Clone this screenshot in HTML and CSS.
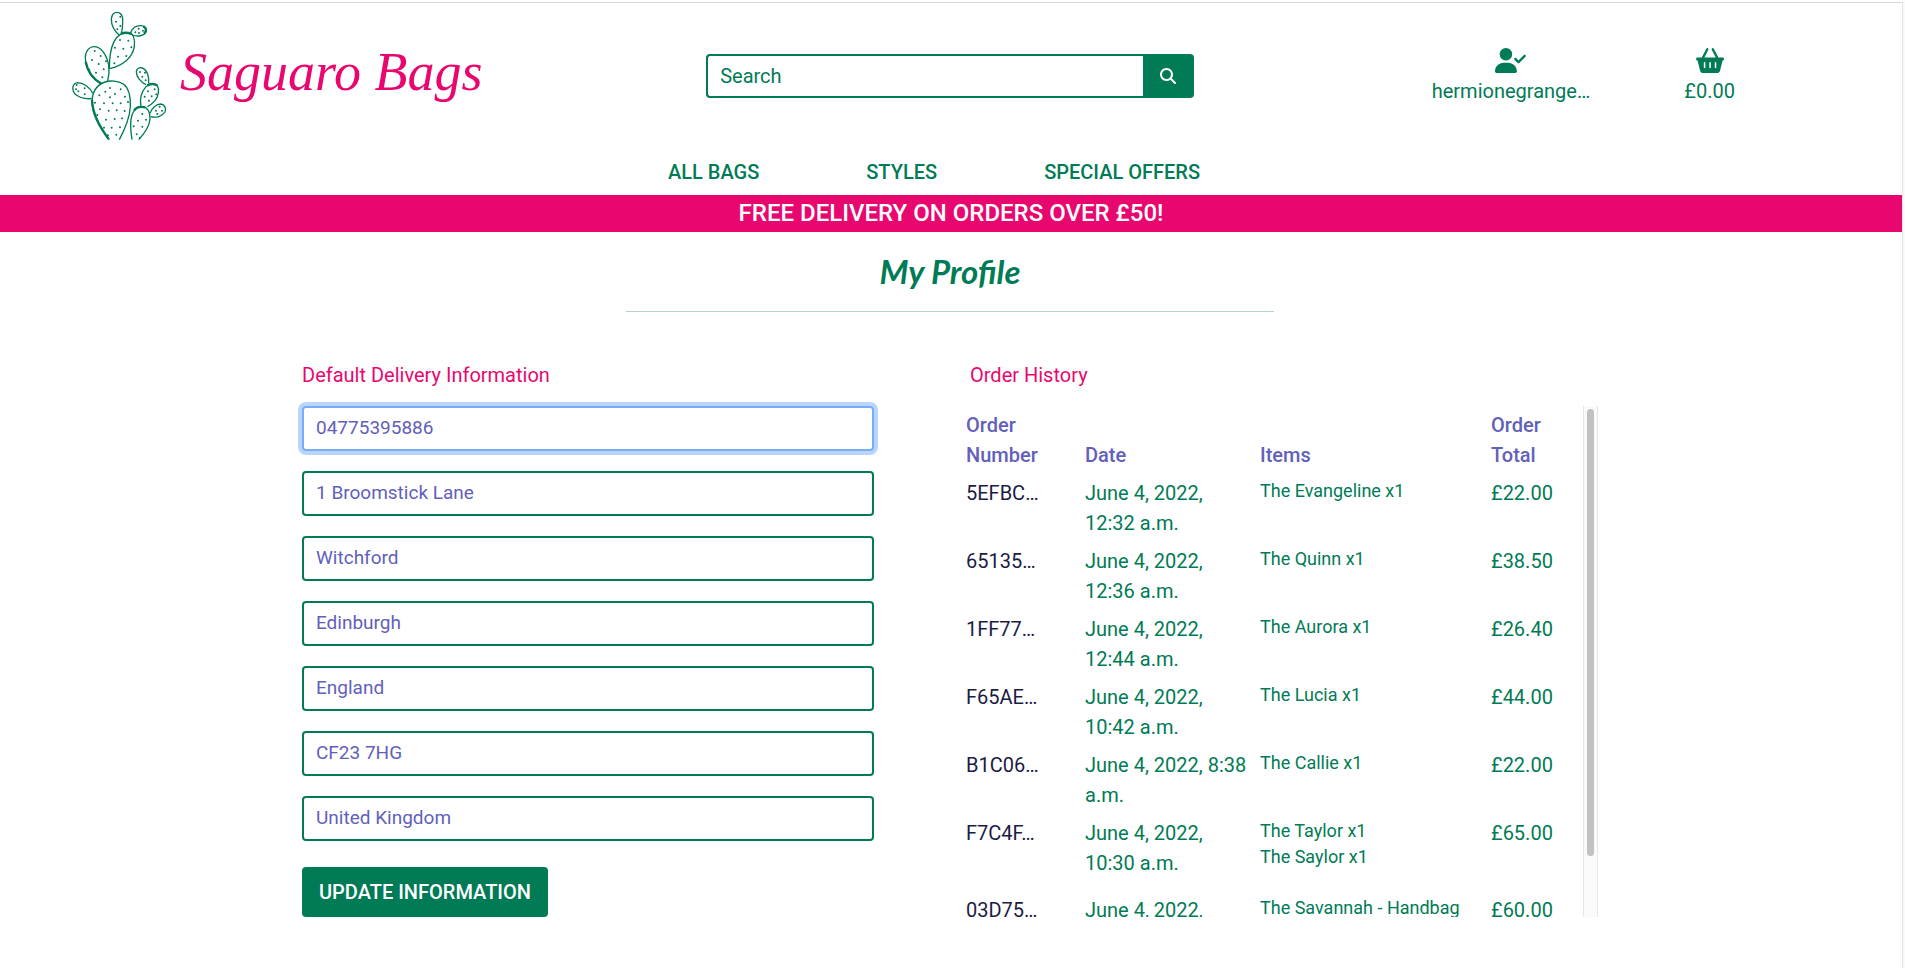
FILE: index.html
```html
<!DOCTYPE html>
<html lang="en">
<head>
<meta charset="utf-8">
<title>My Profile - Saguaro Bags</title>
<link rel="stylesheet" href="styles.css">
</head>
<body>
<div class="page">
  <header class="header">
    <div class="header-row">
      <a class="logo" href="#">
        <svg class="cactus" viewBox="0 9 360 432" fill="none" stroke="currentColor" stroke-width="4" aria-hidden="true">
          <path d="M178 106C165 95 154 78 154 58C155 42 163 36 172 37C184 38 189 50 188 65C188 80 186 95 182 104"/>
          <path d="M212 97C218 84 230 76 243 77C256 78 261 88 258 96C252 108 232 111 218 105C215 103 213 100 212 97"/>
          <path d="M148 206C148 175 152 145 162 125C172 105 190 96 205 98C220 101 226 118 223 140C218 172 190 196 148 206"/>
          <path d="M124 251C98 240 76 205 76 172C77 150 90 139 104 140C125 142 140 165 146 195C149 215 146 232 143 243"/>
          <path d="M98 280C90 262 70 248 52 248C40 250 35 262 40 274C47 290 72 298 95 296"/>
          <path d="M148 419C120 385 97 345 96 305C97 275 112 254 135 246C150 241 175 242 190 252C208 265 212 290 211 320C209 355 196 385 178 419"/>
          <path d="M216 419C212 395 208 370 216 345C222 328 235 318 250 320C264 323 270 340 270 357C268 380 252 402 236 419"/>
          <path d="M243 318C238 300 244 275 258 260C270 250 285 249 292 257C299 268 295 290 285 302C278 310 270 316 262 320"/>
          <path d="M258 254C242 246 229 230 229 215C230 205 238 201 247 204C261 209 268 230 266 250"/>
          <path d="M270 340C276 322 290 312 302 312C314 314 320 325 315 336C306 350 288 354 272 350"/>
          <path stroke-width="7" d="M77 185C82 212 98 236 124 251M96 300C98 345 122 385 146 417M222 332C228 322 240 319 256 322M185 100C195 97 205 98 214 102M262 256C272 251 284 251 292 257M250 79C260 84 260 94 252 101"/>
          <path stroke-width="6" stroke-linecap="round" d="M168 65h0M181 50h0M181 78h0M172 88h0M226 97h0M236 86h0M237 99h0M249 92h0M180 120h0M205 122h0M165 143h0M190 146h0M214 142h0M174 170h0M199 168h0M163 190h0M104 153h0M122 168h0M96 180h0M116 192h0M138 184h0M88 209h0M108 218h0M131 208h0M127 232h0M50 255h0M74 265h0M55 274h0M74 283h0M48 268h0M150 264h0M136 275h0M118 286h0M165 282h0M182 268h0M195 290h0M150 292h0M105 308h0M132 310h0M158 310h0M182 310h0M204 306h0M120 328h0M146 332h0M170 331h0M194 333h0M112 345h0M138 359h0M164 357h0M186 355h0M132 383h0M155 383h0M180 382h0M144 406h0M169 404h0M247 342h0M234 362h0M258 359h0M221 379h0M247 380h0M230 403h0M240 413h0M264 274h0M284 268h0M254 290h0M275 289h0M267 302h0M289 283h0M240 216h0M255 218h0M247 230h0M257 241h0M299 320h0M288 332h0M306 332h0M292 342h0"/>
        </svg>
        <span class="brand">Saguaro Bags</span>
      </a>
      <form class="search" role="search">
        <input class="search-input" type="text" placeholder="Search" aria-label="Search">
        <button class="search-button" type="button" aria-label="Submit search">
          <svg class="search-icon" viewBox="0 0 512 512" fill="currentColor" aria-hidden="true"><path d="M416 208c0 45.900-14.900 88.300-40 122.700L502.600 457.400c12.500 12.500 12.500 32.800 0 45.300s-32.800 12.500-45.300 0L330.700 376c-34.400 25.200-76.800 40-122.700 40C93.100 416 0 322.900 0 208S93.100 0 208 0S416 93.100 416 208zM208 352a144 144 0 1 0 0-288 144 144 0 1 0 0 288z"/></svg>
        </button>
      </form>
      <div class="account">
        <a class="account-link" href="#">
          <svg class="account-icon" viewBox="0 0 640 512" fill="currentColor" aria-hidden="true"><path d="M96 128a128 128 0 1 1 256 0A128 128 0 1 1 96 128zM0 482.300C0 383.800 79.800 304 178.300 304h91.400C368.200 304 448 383.800 448 482.300c0 16.400-13.300 29.700-29.700 29.700H29.700C13.300 512 0 498.700 0 482.300zM625 177L497 305c-9.400 9.400-24.600 9.400-33.900 0l-64-64c-9.400-9.400-9.400-24.600 0-33.900s24.600-9.400 33.900 0l47 47L591 143c9.400-9.400 24.600-9.400 33.900 0s9.400 24.600 0 33.900z"/></svg>
          <span>hermionegrange…</span>
        </a>
        <a class="account-link" href="#">
          <svg class="account-icon" viewBox="0 0 576 512" fill="currentColor" aria-hidden="true"><path d="M253.300 35.100c6.100-11.800 1.500-26.300-10.200-32.400s-26.300-1.500-32.400 10.200L117.600 192H32c-17.700 0-32 14.300-32 32s14.300 32 32 32L83.900 463.500C91 492 116.600 512 146 512H430c29.400 0 55-20 62.100-48.500L544 256c17.700 0 32-14.300 32-32s-14.300-32-32-32H458.400L365.300 12.900C359.200 1.200 344.700-3.400 332.900 2.700s-16.300 20.600-10.200 32.400L404.300 192H171.700L253.300 35.100zM192 304v96c0 8.800-7.200 16-16 16s-16-7.200-16-16V304c0-8.800 7.200-16 16-16s16 7.200 16 16zm96-16c8.800 0 16 7.200 16 16v96c0 8.800-7.200 16-16 16s-16-7.200-16-16V304c0-8.800 7.200-16 16-16zm128 16v96c0 8.800-7.200 16-16 16s-16-7.200-16-16V304c0-8.800 7.200-16 16-16s16 7.200 16 16z"/></svg>
          <span>£0.00</span>
        </a>
      </div>
    </div>
    <nav class="nav">
      <a class="nav-link" href="#">ALL BAGS</a>
      <a class="nav-link" href="#">STYLES</a>
      <a class="nav-link" href="#">SPECIAL OFFERS</a>
    </nav>
  </header>
  <div class="banner">FREE DELIVERY ON ORDERS OVER £50!</div>
  <main class="main">
    <h1 class="title">My Profile</h1>
    <hr class="rule">
    <div class="columns">
      <section>
        <h2 class="heading">Default Delivery Information</h2>
        <form class="delivery">
          <input class="field field-active" type="text" aria-label="Phone number" value="04775395886">
          <input class="field" type="text" aria-label="Street address" value="1 Broomstick Lane">
          <input class="field" type="text" aria-label="Street address 2" value="Witchford">
          <input class="field" type="text" aria-label="Town or city" value="Edinburgh">
          <input class="field" type="text" aria-label="County" value="England">
          <input class="field" type="text" aria-label="Postcode" value="CF23 7HG">
          <input class="field" type="text" aria-label="Country" value="United Kingdom">
          <button class="update" type="button">UPDATE INFORMATION</button>
        </form>
      </section>
      <section>
        <h2 class="heading heading-history">Order History</h2>
        <div class="history">
          <div class="history-scroll">
            <table class="orders">
              <thead>
                <tr><th class="col-number">Order Number</th><th class="col-date">Date</th><th class="col-items">Items</th><th>Order Total</th></tr>
              </thead>
              <tbody>
                <tr><td><a class="order-link" href="#">5EFBC…</a></td><td>June 4, 2022, 12:32 a.m.</td><td><ul class="items"><li>The Evangeline x1</li></ul></td><td>£22.00</td></tr>
                <tr><td><a class="order-link" href="#">65135…</a></td><td>June 4, 2022, 12:36 a.m.</td><td><ul class="items"><li>The Quinn x1</li></ul></td><td>£38.50</td></tr>
                <tr><td><a class="order-link" href="#">1FF77…</a></td><td>June 4, 2022, 12:44 a.m.</td><td><ul class="items"><li>The Aurora x1</li></ul></td><td>£26.40</td></tr>
                <tr><td><a class="order-link" href="#">F65AE…</a></td><td>June 4, 2022, 10:42 a.m.</td><td><ul class="items"><li>The Lucia x1</li></ul></td><td>£44.00</td></tr>
                <tr><td><a class="order-link" href="#">B1C06…</a></td><td>June 4, 2022, 8:38 a.m.</td><td><ul class="items"><li>The Callie x1</li></ul></td><td>£22.00</td></tr>
                <tr><td><a class="order-link" href="#">F7C4F…</a></td><td>June 4, 2022, 10:30 a.m.</td><td><ul class="items"><li>The Taylor x1</li><li>The Saylor x1</li></ul></td><td>£65.00</td></tr>
                <tr><td><a class="order-link" href="#">03D75…</a></td><td>June 4, 2022,</td><td><ul class="items"><li>The Savannah - Handbag</li></ul></td><td>£60.00</td></tr>
              </tbody>
            </table>
          </div>
          <div class="track" aria-hidden="true"><div class="thumb"></div></div>
        </div>
      </section>
    </div>
  </main>
</div>
</body>
</html>
```
FILE: styles.css
```css
:root {
  --green: #007b55;
  --pink: #e8076f;
  --purple: #6260ba;
  --navy: #1b1b45;
}

* {
  box-sizing: border-box;
}

body {
  margin: 0;
  padding-top: 2px;
  padding-right: 2px;
  background: linear-gradient(to left, #fafafa 2px, #fff 2px);
  color: var(--green);
  font: 400 20px/30px Roboto, sans-serif;
}

.page {
  min-height: calc(100vh - 2px);
  border-top: 1px solid #d8d8d8;
  border-right: 1px solid #e4e4e4;
  background: #fff;
}

a {
  color: inherit;
  text-decoration: none;
}

.header,
.main {
  padding-right: 2px;
}

.header-row {
  display: grid;
  grid-template-columns: repeat(3, 1fr);
  align-items: center;
}

.logo {
  display: flex;
  align-items: center;
  padding-left: 60px;
  color: var(--green);
}

.cactus {
  width: 120px;
  height: 144px;
}

.brand {
  padding-bottom: 6px;
  color: var(--pink);
  font: italic 400 54px/64px "Liberation Serif", serif;
  white-space: nowrap;
}

.search {
  display: flex;
  width: 77%;
  height: 44px;
  margin: 2px auto 0;
}

.search-input {
  flex: 1;
  min-width: 0;
  padding: 0 12px;
  border: 2px solid var(--green);
  border-right: 0;
  border-radius: 4px 0 0 4px;
  background: #fff;
  color: var(--green);
  font: inherit;
}

.search-input::placeholder {
  color: var(--green);
  opacity: 1;
}

.search-button {
  display: flex;
  align-items: center;
  justify-content: center;
  width: 51px;
  border: 0;
  border-radius: 0 4px 4px 0;
  background: var(--green);
  color: #fff;
}

.search-icon {
  width: 16px;
  height: 16px;
}

.account {
  display: flex;
  justify-content: center;
  gap: 94px;
  padding-top: 3px;
}

.account-link {
  display: flex;
  flex-direction: column;
  align-items: center;
  gap: 3px;
}

.account-icon {
  height: 25px;
}

.nav {
  display: flex;
  justify-content: center;
  gap: 107px;
  padding: 10px 32px 8px 0;
  font-weight: 500;
}

.banner {
  padding: 3px 0 4px;
  background: var(--pink);
  color: #fff;
  font-size: 24px;
  font-weight: 500;
  text-align: center;
}

.main {
  width: 92%;
  max-width: 1298px;
  margin: 0 auto;
}

.title {
  margin: 0;
  padding: 19px 0 20px;
  font: italic 700 33px/40px Lato, sans-serif;
  text-align: center;
}

.rule {
  width: 50%;
  height: 1px;
  margin: 0 auto;
  border: 0;
  background: #b3d7cc;
}

.columns {
  display: grid;
  grid-template-columns: 572fr 636fr;
  gap: 88px;
  padding-top: 48px;
}

.heading {
  margin: 0 0 16px;
  color: var(--pink);
  font-size: 20px;
  font-weight: 400;
  line-height: 30px;
}

.heading-history {
  padding-left: 8px;
}

.delivery {
  display: flex;
  flex-direction: column;
  gap: 20px;
}

.field {
  width: 100%;
  height: 45px;
  padding: 0 12px 2px;
  border: 2px solid var(--green);
  border-radius: 4px;
  background: #fff;
  color: var(--purple);
  font: inherit;
  font-size: 19px;
}

.field-active {
  border-color: #76adf8;
  box-shadow: 0 0 0 4px #b9d5fc;
}

.update {
  align-self: flex-start;
  height: 50px;
  margin-top: 6px;
  padding: 0 17px;
  border: 0;
  border-radius: 4px;
  background: var(--green);
  color: #fff;
  font: inherit;
  font-weight: 500;
}

.history {
  display: flex;
  height: 511px;
}

.history-scroll {
  flex: 1;
  overflow-y: auto;
  scrollbar-width: none;
}

.track {
  width: 15px;
  padding: 3px;
  border: 1px solid #e6e6e6;
  border-width: 0 1px;
  background: #fafafa;
}

.thumb {
  height: 447px;
  border-radius: 4px;
  background: #c1c1c1;
}

.orders {
  width: 100%;
  border-collapse: collapse;
  table-layout: fixed;
}

.orders th,
.orders td {
  padding: 4px;
  text-align: left;
  vertical-align: top;
}

.orders th {
  color: var(--purple);
  font-weight: 500;
  vertical-align: bottom;
}

.col-number {
  width: 119px;
}

.col-date {
  width: 175px;
}

.col-items {
  width: 231px;
}

.order-link {
  color: var(--navy);
}

.items {
  margin: 0 0 17px;
  padding: 0;
  font-size: 18px;
  line-height: 26px;
  list-style: none;
}
```
